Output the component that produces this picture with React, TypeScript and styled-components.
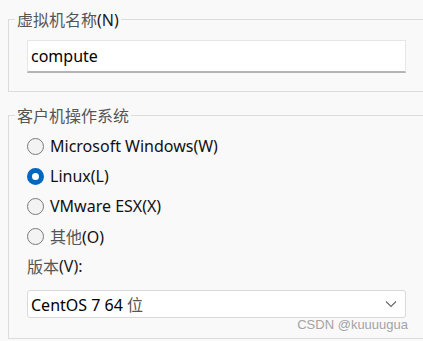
import React from "react";
import styled, { createGlobalStyle } from "styled-components";

const GlobalStyle = createGlobalStyle`
  html, body {
    margin: 0;
    padding: 0;
    background: #f9f9f9;
    overflow: hidden;
  }
  body {
    font-family: "Noto Sans", "Noto Sans CJK SC", sans-serif;
    color: #1a1a1a;
  }
`;

const Page = styled.div`
  position: relative;
  width: 423px;
  height: 341px;
  padding-top: 8px;
  box-sizing: border-box;
  overflow: hidden;
`;

// group box runs off the right edge, as in the dialog screenshot
const Group = styled.fieldset<{ $gap?: number }>`
  margin: ${(p) => p.$gap ?? 0}px 0 0 8px;
  width: 440px;
  box-sizing: border-box;
  border: 1px solid #dcdcdc;
  padding: 0;
`;

const Legend = styled.legend`
  margin-left: 6px;
  padding: 0 2px;
  font-size: 16px;
  line-height: 22px;
`;

const Cjk = styled.span`
  font-family: "Noto Sans CJK SC", sans-serif;
  color: #555;
`;

const NameBody = styled.div`
  padding: 9px 0 18px 18px;
`;

const TextBox = styled.div`
  width: 379px;
  height: 33px;
  box-sizing: border-box;
  background: #fff;
  border: 1px solid #e6e6e6;
  border-bottom: 2px solid #b4b4b4;
  padding: 0 0 0 3px;
  display: flex;
  align-items: center;
  font-size: 16px;
  color: #000;
`;

const OsBody = styled.div`
  padding: 4px 0 20px 18px;
  display: flex;
  flex-direction: column;
`;

const RadioRow = styled.label`
  height: 30px;
  display: flex;
  align-items: center;
  gap: 6px;
  font-size: 16px;
  color: #111;
`;

const Dot = styled.span<{ $on?: boolean }>`
  width: 17px;
  height: 17px;
  box-sizing: border-box;
  border-radius: 50%;
  flex: none;
  background: ${(p) => (p.$on ? "#fff" : "#f3f3f3")};
  border: ${(p) => (p.$on ? "5px solid #0067c0" : "1px solid #7a7a7a")};
`;

const FieldLabel = styled.div`
  height: 30px;
  display: flex;
  align-items: center;
  font-size: 16px;
  margin-bottom: 9px;
`;

const Select = styled.div`
  width: 379px;
  height: 28px;
  box-sizing: border-box;
  background: #fff;
  border: 1px solid #d9d9d9;
  border-radius: 3px;
  padding: 0 8px 0 3px;
  display: flex;
  align-items: center;
  justify-content: space-between;
  font-size: 16px;
  color: #000;
`;

const Watermark = styled.div`
  position: absolute;
  right: 15px;
  bottom: 9px;
  font-family: "Liberation Sans", sans-serif;
  font-size: 13px;
  color: #a3a3a3;
`;

const options = [
  { label: "Microsoft Windows(W)", on: false },
  { label: "Linux(L)", on: true },
  { label: "VMware ESX(X)", on: false },
];

const Chevron = () => (
  <svg width="12" height="8" viewBox="0 0 12 8">
    <path d="M1 1.5 L6 6.5 L11 1.5" fill="none" stroke="#666" strokeWidth="1.1" />
  </svg>
);

const App = () => {
  return (
    <Page>
      <GlobalStyle />
      <Group>
        <Legend>
          <Cjk>虚拟机名称</Cjk>(N)
        </Legend>
        <NameBody>
          <TextBox>compute</TextBox>
        </NameBody>
      </Group>
      <Group $gap={12}>
        <Legend>
          <Cjk>客户机操作系统</Cjk>
        </Legend>
        <OsBody>
          {options.map((o) => (
            <RadioRow key={o.label}>
              <Dot $on={o.on} />
              {o.label}
            </RadioRow>
          ))}
          <RadioRow>
            <Dot />
            <span>
              <Cjk>其他</Cjk>(O)
            </span>
          </RadioRow>
          <FieldLabel>
            <Cjk>版本</Cjk>(V):
          </FieldLabel>
          <Select>
            <span>
              CentOS 7 64 <Cjk>位</Cjk>
            </span>
            <Chevron />
          </Select>
        </OsBody>
      </Group>
      <Watermark>CSDN @kuuuugua</Watermark>
    </Page>
  );
};

export default App;
